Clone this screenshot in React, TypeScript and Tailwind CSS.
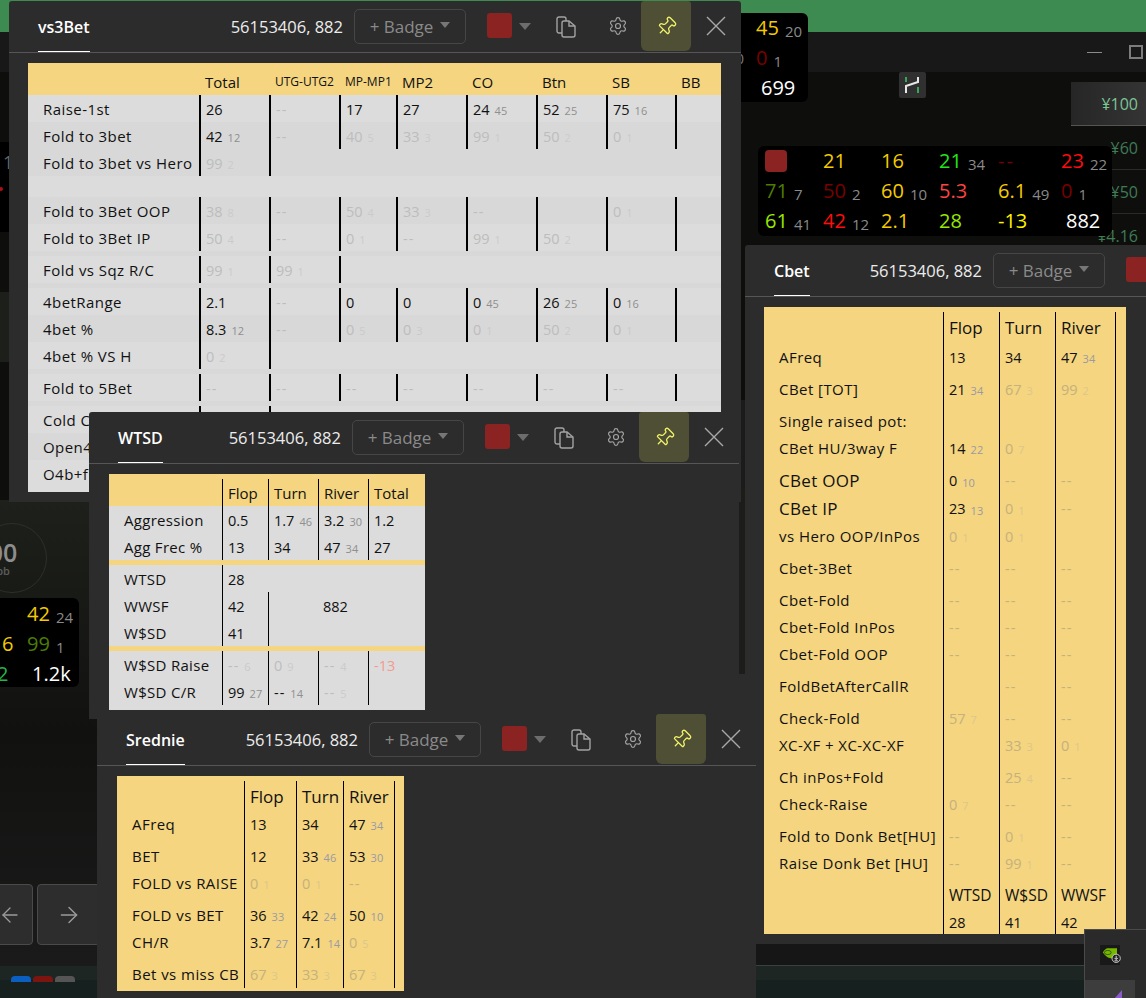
import React from 'react'
import { Settings, Pin, ArrowRight, ArrowLeft } from 'lucide-react'

type Spec = string | null

interface StatRow {
  label?: string
  cells?: Spec[]
  h?: string
  bg?: string
  labelClass?: string
}

const vs3BetCols = 'grid-cols-[171px_70px_70px_57px_70px_70px_70px_69px_46px]'
const wtsdCols = 'grid-cols-[113px_46px_50px_50px_57px]'
const sredCols = 'grid-cols-[127px_52px_47px_51px_10px]'
const cbetCols = 'grid-cols-[179px_56px_56px_60px_11px]'

const lightBg = 'bg-[#dcdcdc]'
const darkBg = 'bg-[#d8d8d8]'

const vs3BetRows: StatRow[] = [
  { label: 'Raise-1st', bg: lightBg, cells: ['26', '~--', '17', '27', '24 45', '52 25', '75 16', ''] },
  { label: 'Fold to 3bet', bg: darkBg, cells: ['42 12', '~--', '~40 5', '~33 3', '~99 1', '~50 2', '~0 1', ''] },
  { label: 'Fold to 3bet vs Hero', bg: darkBg, cells: ['~99 2', ''] },
  { h: 'h-[21px]', bg: lightBg },
  { label: 'Fold to 3Bet OOP', bg: darkBg, cells: ['~38 8', '~--', '~50 4', '~33 3', '~--', '', '~0 1', ''] },
  { label: 'Fold to 3Bet IP', bg: lightBg, cells: ['~50 4', '~--', '~0 1', '~--', '~99 1', '~50 2', '', ''] },
  { h: 'h-[5px]', bg: darkBg },
  { label: 'Fold vs Sqz R/C', bg: lightBg, cells: ['~99 1', '~99 1', ''] },
  { h: 'h-[5px]', bg: darkBg },
  { label: '4betRange', bg: lightBg, cells: ['2.1', '~--', '0', '0', '0 45', '26 25', '0 16', ''] },
  { label: '4bet %', bg: darkBg, cells: ['8.3 12', '~--', '~0 5', '~0 3', '~0 1', '~50 2', '~0 1', ''] },
  { label: '4bet % VS H', bg: lightBg, cells: ['~0 2', ''] },
  { h: 'h-[5px]', bg: darkBg },
  { label: 'Fold to 5Bet', bg: lightBg, cells: ['~--', '~--', '~--', '~--', '~--', '~--', '~--', ''] },
  { h: 'h-[5px]', bg: darkBg },
  { label: 'Cold Call', bg: lightBg, cells: ['', ''] },
  { label: 'Open4bet', bg: darkBg, cells: [] },
  { label: 'O4b+f', bg: lightBg, cells: [] },
]

const wtsdBlocks: StatRow[][] = [
  [
    { label: 'Aggression', cells: ['0.5', '1.7 46', '3.2 30', '1.2'] },
    { label: 'Agg Frec %', cells: ['13', '34', '47 34', '27'] },
  ],
  [
    { label: 'WTSD', cells: ['28', null, null, null] },
    { label: 'WWSF', cells: ['42', '', '_882', null] },
    { label: 'W$SD', cells: ['41', '', null, null] },
  ],
  [
    { label: 'W$SD Raise', cells: ['~-- 6', '~0 9', '~-- 4', '!-13'] },
    { label: 'W$SD C/R', cells: ['99 27', '-- 14', '~-- 5', ''] },
  ],
]

const sredRows: StatRow[] = [
  { label: 'AFreq', cells: ['13', '34', '47 34', ''] },
  { h: 'h-[5px]', cells: ['', '', '', ''] },
  { label: 'BET', cells: ['12', '33 46', '53 30', ''] },
  { label: 'FOLD vs RAISE', cells: ['~0 1', '~0 1', '~--', ''] },
  { h: 'h-[5px]', cells: ['', '', '', ''] },
  { label: 'FOLD vs BET', cells: ['36 33', '42 24', '50 10', ''] },
  { label: 'CH/R', cells: ['3.7 27', '7.1 14', '~0 5', ''] },
  { h: 'h-[5px]', cells: ['', '', '', ''] },
  { label: 'Bet vs miss CB', cells: ['~67 3', '~33 3', '~67 3', ''] },
]

const gap = { h: 'h-[5px]', cells: ['', '', '', ''] }
const big = 'text-[17px] font-medium tracking-[0.3px]'

const cbetRows: StatRow[] = [
  { label: 'AFreq', cells: ['13', '34', '47 34', ''] },
  gap,
  { label: 'CBet [TOT]', cells: ['21 34', '~67 3', '~99 2', ''] },
  gap,
  { label: 'Single raised pot:', cells: ['', '', '', ''] },
  { label: 'CBet HU/3way F', cells: ['14 22', '~0 7', '', ''] },
  gap,
  { label: 'CBet OOP', h: 'h-[28px]', labelClass: big, cells: ['0 10', '~--', '~--', ''] },
  { label: 'CBet IP', h: 'h-[28px]', labelClass: big, cells: ['23 13', '~0 1', '~--', ''] },
  { label: 'vs Hero OOP/InPos', cells: ['~0 1', '~0 1', '', ''] },
  gap,
  { label: 'Cbet-3Bet', cells: ['~--', '~--', '~--', ''] },
  gap,
  { label: 'Cbet-Fold', cells: ['~--', '~--', '~--', ''] },
  { label: 'Cbet-Fold InPos', cells: ['~--', '~--', '~--', ''] },
  { label: 'Cbet-Fold OOP', cells: ['~--', '~--', '~--', ''] },
  gap,
  { label: 'FoldBetAfterCallR', cells: ['', '~--', '~--', ''] },
  gap,
  { label: 'Check-Fold', cells: ['~57 7', '~--', '~--', ''] },
  { label: 'XC-XF + XC-XC-XF', cells: ['', '~33 3', '~0 1', ''] },
  gap,
  { label: 'Ch inPos+Fold', cells: ['', '~25 4', '~--', ''] },
  { label: 'Check-Raise', cells: ['~0 7', '~--', '~--', ''] },
  gap,
  { label: 'Fold to Donk Bet[HU]', cells: ['~--', '~0 1', '~--', ''] },
  { label: 'Raise Donk Bet [HU]', cells: ['~--', '~99 1', '~--', ''] },
  gap,
  { cells: ['#WTSD', '#W$SD', '#WWSF', ''] },
  { cells: ['28', '41', '42', ''] },
]

const CopyIcon = () => (
  <svg width="20" height="22" viewBox="0 0 20 22" fill="none" stroke="#a3a3a3" strokeWidth="1.4">
    <path d="M6 17H3a2 2 0 0 1-2-2V3a2 2 0 0 1 2-2h5a2 2 0 0 1 2 2v2" />
    <path d="M6 7a2 2 0 0 1 2-2h5l6 5v9a2 2 0 0 1-2 2H8a2 2 0 0 1-2-2z" />
    <path d="M13 5v5h6" />
  </svg>
)

const WinHeader = ({ title }: { title: string }) => (
  <div className="flex h-[52px] items-start border-b border-[#565656] text-white">
    <div className="ml-[29px] flex h-[51px] items-center border-b border-white pt-[1px] text-[16px] font-semibold leading-none">
      {title}
    </div>
    <div className="ml-auto mt-[16px] mr-[11px] text-[16.5px] leading-[20px] text-[#ececec]">56153406, 882</div>
    <div className="mt-[8px] flex h-[35px] w-[112px] items-center justify-center rounded-[5px] border border-[#464646] text-[17px] text-[#8a8a8a]">
      <span>+ Badge</span>
      <span className="ml-[7px] mb-[4px] h-0 w-0 border-x-[5px] border-t-[6px] border-x-transparent border-t-[#777777]" />
    </div>
    <div className="ml-[21px] mt-[12px] h-[25px] w-[25px] rounded-[3px] bg-[#8b2323]" />
    <div className="ml-[7px] mt-[22px] h-0 w-0 border-x-[6px] border-t-[7px] border-x-transparent border-t-[#6d6d6d]" />
    <div className="ml-[25px] mt-[15px] w-[20px]">
      <CopyIcon />
    </div>
    <Settings className="ml-[32px] mt-[15px]" size={20} strokeWidth={1.4} color="#a3a3a3" />
    <div className="ml-[13px] flex h-[50px] w-[50px] items-center justify-center rounded-b-[6px] rounded-t-[3px] bg-[#4e4f35]">
      <Pin className="rotate-45" size={21} strokeWidth={1.5} color="#f3f36a" />
    </div>
    <svg className="ml-[15px] mr-[15px] mt-[15px]" width="20" height="20" viewBox="0 0 20 20" stroke="#a8a8a8" strokeWidth="1.4">
      <path d="M1 1l18 18M19 1L1 19" />
    </svg>
  </div>
)

interface WindowProps {
  title: string
  className: string
  children: React.ReactNode
}

const Win = ({ title, className, children }: WindowProps) => (
  <div className={`absolute overflow-hidden rounded-t-[3px] bg-[#2c2c2c] font-['Open_Sans',sans-serif] ${className}`}>
    <WinHeader title={title} />
    <div className="pt-[10px]">{children}</div>
  </div>
)

interface ThemeColors {
  faint: string
  faintN: string
  n: string
}

const greyTheme: ThemeColors = { faint: 'text-[#bdbdbd]', faintN: 'text-[#cbcbcb]', n: 'text-[#8f8f8f]' }
const goldTheme: ThemeColors = { faint: 'text-[#c4b17d]', faintN: 'text-[#dcc78b]', n: 'text-[#9a9aa4]' }

// cell spec: null = nothing, '' = divider only, ~ faint, ! warning, _ no divider, # column title
const Cell = ({ spec, line, theme, text, shift }: { spec: Spec; line: string; theme: ThemeColors; text: string; shift: string }) => {
  if (spec === null) return <div />
  let raw = spec
  let border = line
  let tone = 'text-[#111111]'
  let nTone = theme.n
  let size = text
  if (raw.startsWith('~')) {
    raw = raw.slice(1)
    tone = theme.faint
    nTone = theme.faintN
  } else if (raw.startsWith('!')) {
    raw = raw.slice(1)
    tone = 'text-[#f49a8f]'
  } else if (raw.startsWith('_')) {
    raw = raw.slice(1)
    border = ''
  } else if (raw.startsWith('#')) {
    raw = raw.slice(1)
    size = 'text-[15.5px] font-medium'
  }
  const [value, count] = raw.split(' ')
  return (
    <div className={`flex h-full items-center overflow-visible whitespace-nowrap pl-[5px] ${shift} ${border}`}>
      <span className={`${size} ${tone} ${value === '--' ? 'tracking-[1px] text-[12px]' : ''}`}>{value}</span>
      {count && <span className={`relative top-[2px] ml-[5px] text-[11px] ${nTone}`}>{count}</span>}
    </div>
  )
}

interface RowsProps {
  rows: StatRow[]
  cols: string
  line: string
  theme: ThemeColors
  text: string
  labelText: string
  shift?: string
}

const Rows = ({ rows, cols, line, theme, text, labelText, shift = '' }: RowsProps) => (
  <>
    {rows.map((row, i) => (
      <div key={i} className={`grid ${cols} ${row.h ?? 'h-[27px]'} ${row.bg ?? ''}`}>
        <div className={`flex items-center whitespace-nowrap pl-[15px] text-[#111111] ${shift} ${row.labelClass || labelText}`}>{row.label}</div>
        {row.cells?.map((c, j) => <Cell key={j} spec={c} line={line} theme={theme} text={text} shift={shift} />)}
      </div>
    ))}
  </>
)

const GoldHeader = ({ cols, line, labels, pad }: { cols: string; line: string; labels: string[]; pad: string }) => (
  <div className={`grid ${cols} ${pad}`}>
    <div />
    {labels.map((l, i) => (
      <div key={i} className={`flex items-center whitespace-nowrap pl-[5px] text-[#111111] ${line}`}>
        {l}
      </div>
    ))}
  </div>
)

interface HudItem {
  v?: string
  n?: string
  c?: string
  cls?: string
}

const yellow = 'text-[#f4cb00]'
const darkRed = 'text-[#780000]'
const red = 'text-[#ff0d0d]'
const lime = 'text-[#9ae600]'
const olive = 'text-[#4d7d00]'

const rightHud: HudItem[] = [
  {},
  { v: '21', c: yellow },
  { v: '16', c: yellow },
  { v: '21', n: '34', c: 'text-[#22e61a]' },
  { v: '--', c: darkRed, cls: 'tracking-[2px]' },
  { v: '23', n: '22', c: red },
  { v: '71', n: '7', c: olive },
  { v: '50', n: '2', c: darkRed },
  { v: '60', n: '10', c: yellow },
  { v: '5.3', c: 'text-[#ff4343]' },
  { v: '6.1', n: '49', c: yellow },
  { v: '0', n: '1', c: darkRed },
  { v: '61', n: '41', c: lime },
  { v: '42', n: '12', c: red },
  { v: '2.1', c: yellow },
  { v: '28', c: lime },
  { v: '-13', c: 'text-[#fff200]' },
  { v: '882', c: 'text-white', cls: 'pl-[5px]' },
]

const HudText = ({ item }: { item: HudItem }) => (
  <div className={`flex items-baseline whitespace-nowrap ${item.cls ?? ''}`}>
    <span className={`text-[20px] leading-[30px] ${item.c ?? ''}`}>{item.v}</span>
    {item.n && <span className="relative top-[2px] ml-[6px] text-[15px] leading-none text-[#8a8a8a]">{item.n}</span>}
  </div>
)

export default function App() {
  return (
    <div className="relative h-[998px] w-[1146px] overflow-hidden bg-[#0c0c0c] font-['Open_Sans',sans-serif]">
      {/* table client behind the popups */}
      <div className="flex h-full flex-col">
        <div className="h-[32px] bg-[#3d8b50]" />
        <div className="flex h-[40px] items-center justify-end bg-[#181818] pr-[3px]">
          <div className="mr-[27px] h-[1px] w-[15px] bg-[#8a8a8a]" />
          <div className="h-[14px] w-[14px] border-2 border-[#7c7c7c]" />
        </div>
        <div className="flex-1 bg-[#0e0f0d]" />
        <div className="h-[22px] bg-[#161616]" />
        <div className="h-[15px] border-t border-[#39423e] bg-[#1d2623]" />
        <div className="h-[18px] bg-[#15201f]" />
      </div>

      {/* left edge stuff */}
      <div className="absolute left-0 top-[142px] h-[90px] w-[12px] bg-black text-[18px] text-[#666666]">
        <span className="absolute left-[3px] top-[7px]">1</span>
        <span className="absolute left-[-1px] top-[45px] h-[4px] w-[4px] rounded-full bg-[#b01010]" />
      </div>
      <div className="absolute left-0 top-[292px] h-[70px] w-[12px] bg-[#1d1f1a]" />
      <div className="absolute left-0 top-[500px] h-[466px] w-[110px] bg-gradient-to-b from-[#1e201b] via-[#111210] to-[#1a1a1a]" />
      <div className="absolute left-[-23px] top-[523px] flex h-[70px] w-[70px] flex-col items-center justify-center rounded-full border border-[#2d2f2a] pr-[18px] leading-none">
        <span className="text-[25px] font-semibold text-[#8d8d8d]">00</span>
        <span className="text-[11px] font-semibold text-[#5c5c5c]">bb</span>
      </div>
      <div className="absolute left-[-20px] top-[598px] grid h-[89px] w-[99px] grid-cols-[47px_52px] rounded-r-[6px] rounded-l-none bg-black pt-[1px]">
        <span className="text-[20px] leading-[30px] text-[#ff0d0d]">-</span>
        <HudText item={{ v: '42', n: '24', c: yellow }} />
        <span className="pl-[22px] text-[20px] leading-[30px] text-[#f4cb00]">6</span>
        <HudText item={{ v: '99', n: '1', c: olive }} />
        <span className="pl-[17px] text-[20px] leading-[30px] text-[#22b54a]">2</span>
        <HudText item={{ v: '1.2k', c: 'text-white', cls: 'pl-[5px]' }} />
      </div>
      <div className="absolute left-[-30px] top-[884px] flex gap-[4px]">
        <div className="flex h-[61px] w-[63px] items-center justify-end rounded-[4px] border border-[#4a4a4a] bg-[#2d2d2d] pr-[10px]">
          <ArrowLeft size={24} strokeWidth={1.3} color="#9b9b9b" />
        </div>
        <div className="flex h-[61px] w-[63px] items-center justify-center rounded-[4px] border border-[#4a4a4a] bg-[#2d2d2d]">
          <ArrowRight size={26} strokeWidth={1.3} color="#9b9b9b" />
        </div>
      </div>
      <div className="absolute left-[11px] top-[976px] flex gap-[2px]">
        <div className="h-[6px] w-[20px] rounded-t-[4px] bg-[#0a5fc0]" />
        <div className="h-[6px] w-[20px] rounded-t-[4px] bg-[#7c1410]" />
        <div className="h-[6px] w-[20px] rounded-t-[4px] bg-[#555555]" />
      </div>

      {/* stakes list */}
      <div className="absolute left-[1071px] top-[82px] flex h-[44px] w-[75px] items-center justify-end border-b border-[#555555] bg-gradient-to-r from-[#262626] to-[#343434] pr-[8px] text-[16px] text-[#7cc596]">
        ¥100
      </div>
      <div className="absolute left-[1090px] top-[126px] w-[56px] text-right text-[16px] text-[#3f7b56]">
        <div className="flex h-[44px] items-center justify-end border-b border-[#2a2a2a] pr-[8px]">¥60</div>
        <div className="flex h-[44px] items-center justify-end border-b border-[#2a2a2a] pr-[8px]">¥50</div>
        <div className="flex h-[44px] items-center justify-end pr-[8px]">¥4.16</div>
      </div>

      <div className="absolute left-[899px] top-[72px] flex h-[26px] w-[27px] items-center justify-center rounded-[2px] bg-[#2f302f]">
        <svg width="17" height="18" viewBox="0 0 17 18" fill="none" strokeWidth="2">
          <path d="M2 17v-7l12-4V1" stroke="#e8e8e8" />
          <path d="M2 1v5M14 11v6" stroke="#3aa55a" />
        </svg>
      </div>

      {/* HUD panels */}
      <div className="absolute left-[660px] top-[13px] grid h-[89px] w-[148px] grid-cols-[96px_52px] rounded-[6px] bg-black">
        <span />
        <HudText item={{ v: '45', n: '20', c: yellow }} />
        <span className="pr-[12px] text-right text-[15px] leading-[30px] text-[#777777]">0</span>
        <HudText item={{ v: '0', n: '1', c: darkRed }} />
        <span />
        <HudText item={{ v: '699', c: 'text-white', cls: 'pl-[5px]' }} />
      </div>
      <div className="absolute left-[758px] top-[146px] grid h-[90px] w-[354px] grid-cols-[58px_58px_58px_59px_63px_51px] rounded-[6px] bg-black pl-[7px]">
        {rightHud.map((item, i) =>
          i === 0 ? (
            <div key={i} className="mt-[4px] h-[22px] w-[22px] rounded-[4px] bg-[#8b2323]" />
          ) : (
            <HudText key={i} item={item} />
          ),
        )}
      </div>

      {/* leftovers of other popups */}
      <div className="absolute left-[741px] top-[400px] h-[88px] w-[4px] bg-[#1b1b1b]" />
      <div className="absolute left-[738px] top-[488px] h-[186px] w-[7px] bg-[#1c1d1b]" />
      <div className="absolute left-[738px] top-[674px] h-[40px] w-[8px] bg-[#2c2c2c]" />

      <Win title="vs3Bet" className="left-[9px] top-[1px] h-[501px] w-[732px]">
        <div className="ml-[19px] h-[429px] w-[693px] overflow-hidden bg-[#dcdcdc]">
          <div className={`grid h-[32px] ${vs3BetCols} items-end bg-[#f5d580] pb-[2px] text-[#111111]`}>
            <div />
            <div className="pl-[6px] text-[15px] font-medium leading-[22px]">Total</div>
            <div className="pl-[6px] text-[12px] leading-[22px]">UTG-UTG2</div>
            <div className="pl-[6px] text-[12px] leading-[22px]">MP-MP1</div>
            <div className="pl-[6px] text-[15px] font-medium leading-[22px]">MP2</div>
            <div className="pl-[6px] text-[15px] font-medium leading-[22px]">CO</div>
            <div className="pl-[6px] text-[15px] font-medium leading-[22px]">Btn</div>
            <div className="pl-[6px] text-[15px] font-medium leading-[22px]">SB</div>
            <div className="pl-[6px] text-[15px] font-medium leading-[22px]">BB</div>
          </div>
          <Rows rows={vs3BetRows} cols={vs3BetCols} line="border-l-2 border-black" theme={greyTheme} text="text-[14.5px]" labelText="text-[15px] font-medium tracking-[0.45px]" shift="pt-[2px]" />
        </div>
      </Win>

      <Win title="Cbet" className="left-[745px] top-[245px] h-[699px] w-[635px]">
        <div className="ml-[19px] h-[627px] w-[362px] overflow-hidden bg-[#f5d580] pt-[5px]">
          <GoldHeader cols={cbetCols} line="border-l border-black text-[17px] font-medium" labels={['Flop', 'Turn', 'River', '']} pad="h-[32px]" />
          <Rows rows={cbetRows} cols={cbetCols} line="border-l border-black" theme={goldTheme} text="text-[14.5px]" labelText="text-[15px] font-medium tracking-[0.45px]" />
        </div>
      </Win>

      <Win title="WTSD" className="left-[89px] top-[412px] h-[307px] w-[650px]">
        <div className="ml-[20px] w-[316px] bg-[#dcdcdc]">
          <div className="bg-[#f5d580] pt-[5px]">
            <GoldHeader cols={wtsdCols} line="border-l border-black pt-[2px] text-[15px] font-medium" labels={['Flop', 'Turn', 'River', 'Total']} pad="h-[27px]" />
          </div>
          {wtsdBlocks.map((block, i) => (
            <div key={i}>
              {i > 0 && <div className="h-[5px] bg-[#f5d580]" />}
              <Rows rows={block} cols={wtsdCols} line="border-l border-black" theme={greyTheme} text="text-[14.5px]" labelText="text-[15px] font-medium tracking-[0.3px]" shift="pt-[2px]" />
            </div>
          ))}
          <div className="h-[5px]" />
        </div>
      </Win>

      <Win title="Srednie" className="left-[97px] top-[714px] h-[284px] w-[659px]">
        <div className="ml-[20px] h-[215px] w-[287px] overflow-hidden bg-[#f5d580] pt-[5px]">
          <GoldHeader cols={sredCols} line="border-l border-black pt-[2px] text-[17px] font-medium" labels={['Flop', 'Turn', 'River', '']} pad="h-[30px]" />
          <Rows rows={sredRows} cols={sredCols} line="border-l border-black" theme={goldTheme} text="text-[14.5px] font-medium" labelText="text-[15px] font-medium tracking-[0.45px]" />
        </div>
      </Win>

      {/* tray popup */}
      <div className="absolute left-[1084px] top-[929px] h-[69px] w-[62px] border-l border-t border-[#4a4a4a] bg-[#2a2a2a]">
        <div className="ml-[15px] mt-[15px] flex h-[20px] w-[20px] items-center justify-center bg-[#191919]">
          <svg width="24" height="22" viewBox="0 0 24 22" className="relative left-[2px]">
            <path d="M6 3h12v12H10C6 14 3 11 1 8c2-3 3-4 5-5z" fill="#76b900" />
            <ellipse cx="7" cy="8" rx="4" ry="2.5" fill="none" stroke="#2b4a00" strokeWidth="1" />
            <circle cx="17" cy="15" r="5" fill="#222222" stroke="#dddddd" strokeWidth="1" />
            <path d="M17 12v4M15 14.5l2 2 2-2M15 18h4" stroke="#ffffff" strokeWidth="1" fill="none" />
          </svg>
        </div>
        <div className="relative mt-[15px] h-[19px] w-[50px] bg-[#3d3d3d]">
          <div className="absolute left-[29px] top-[10px] h-0 w-0 border-b-[9px] border-l-[8px] border-b-[#8a5cc9] border-l-transparent" />
        </div>
      </div>
    </div>
  )
}
